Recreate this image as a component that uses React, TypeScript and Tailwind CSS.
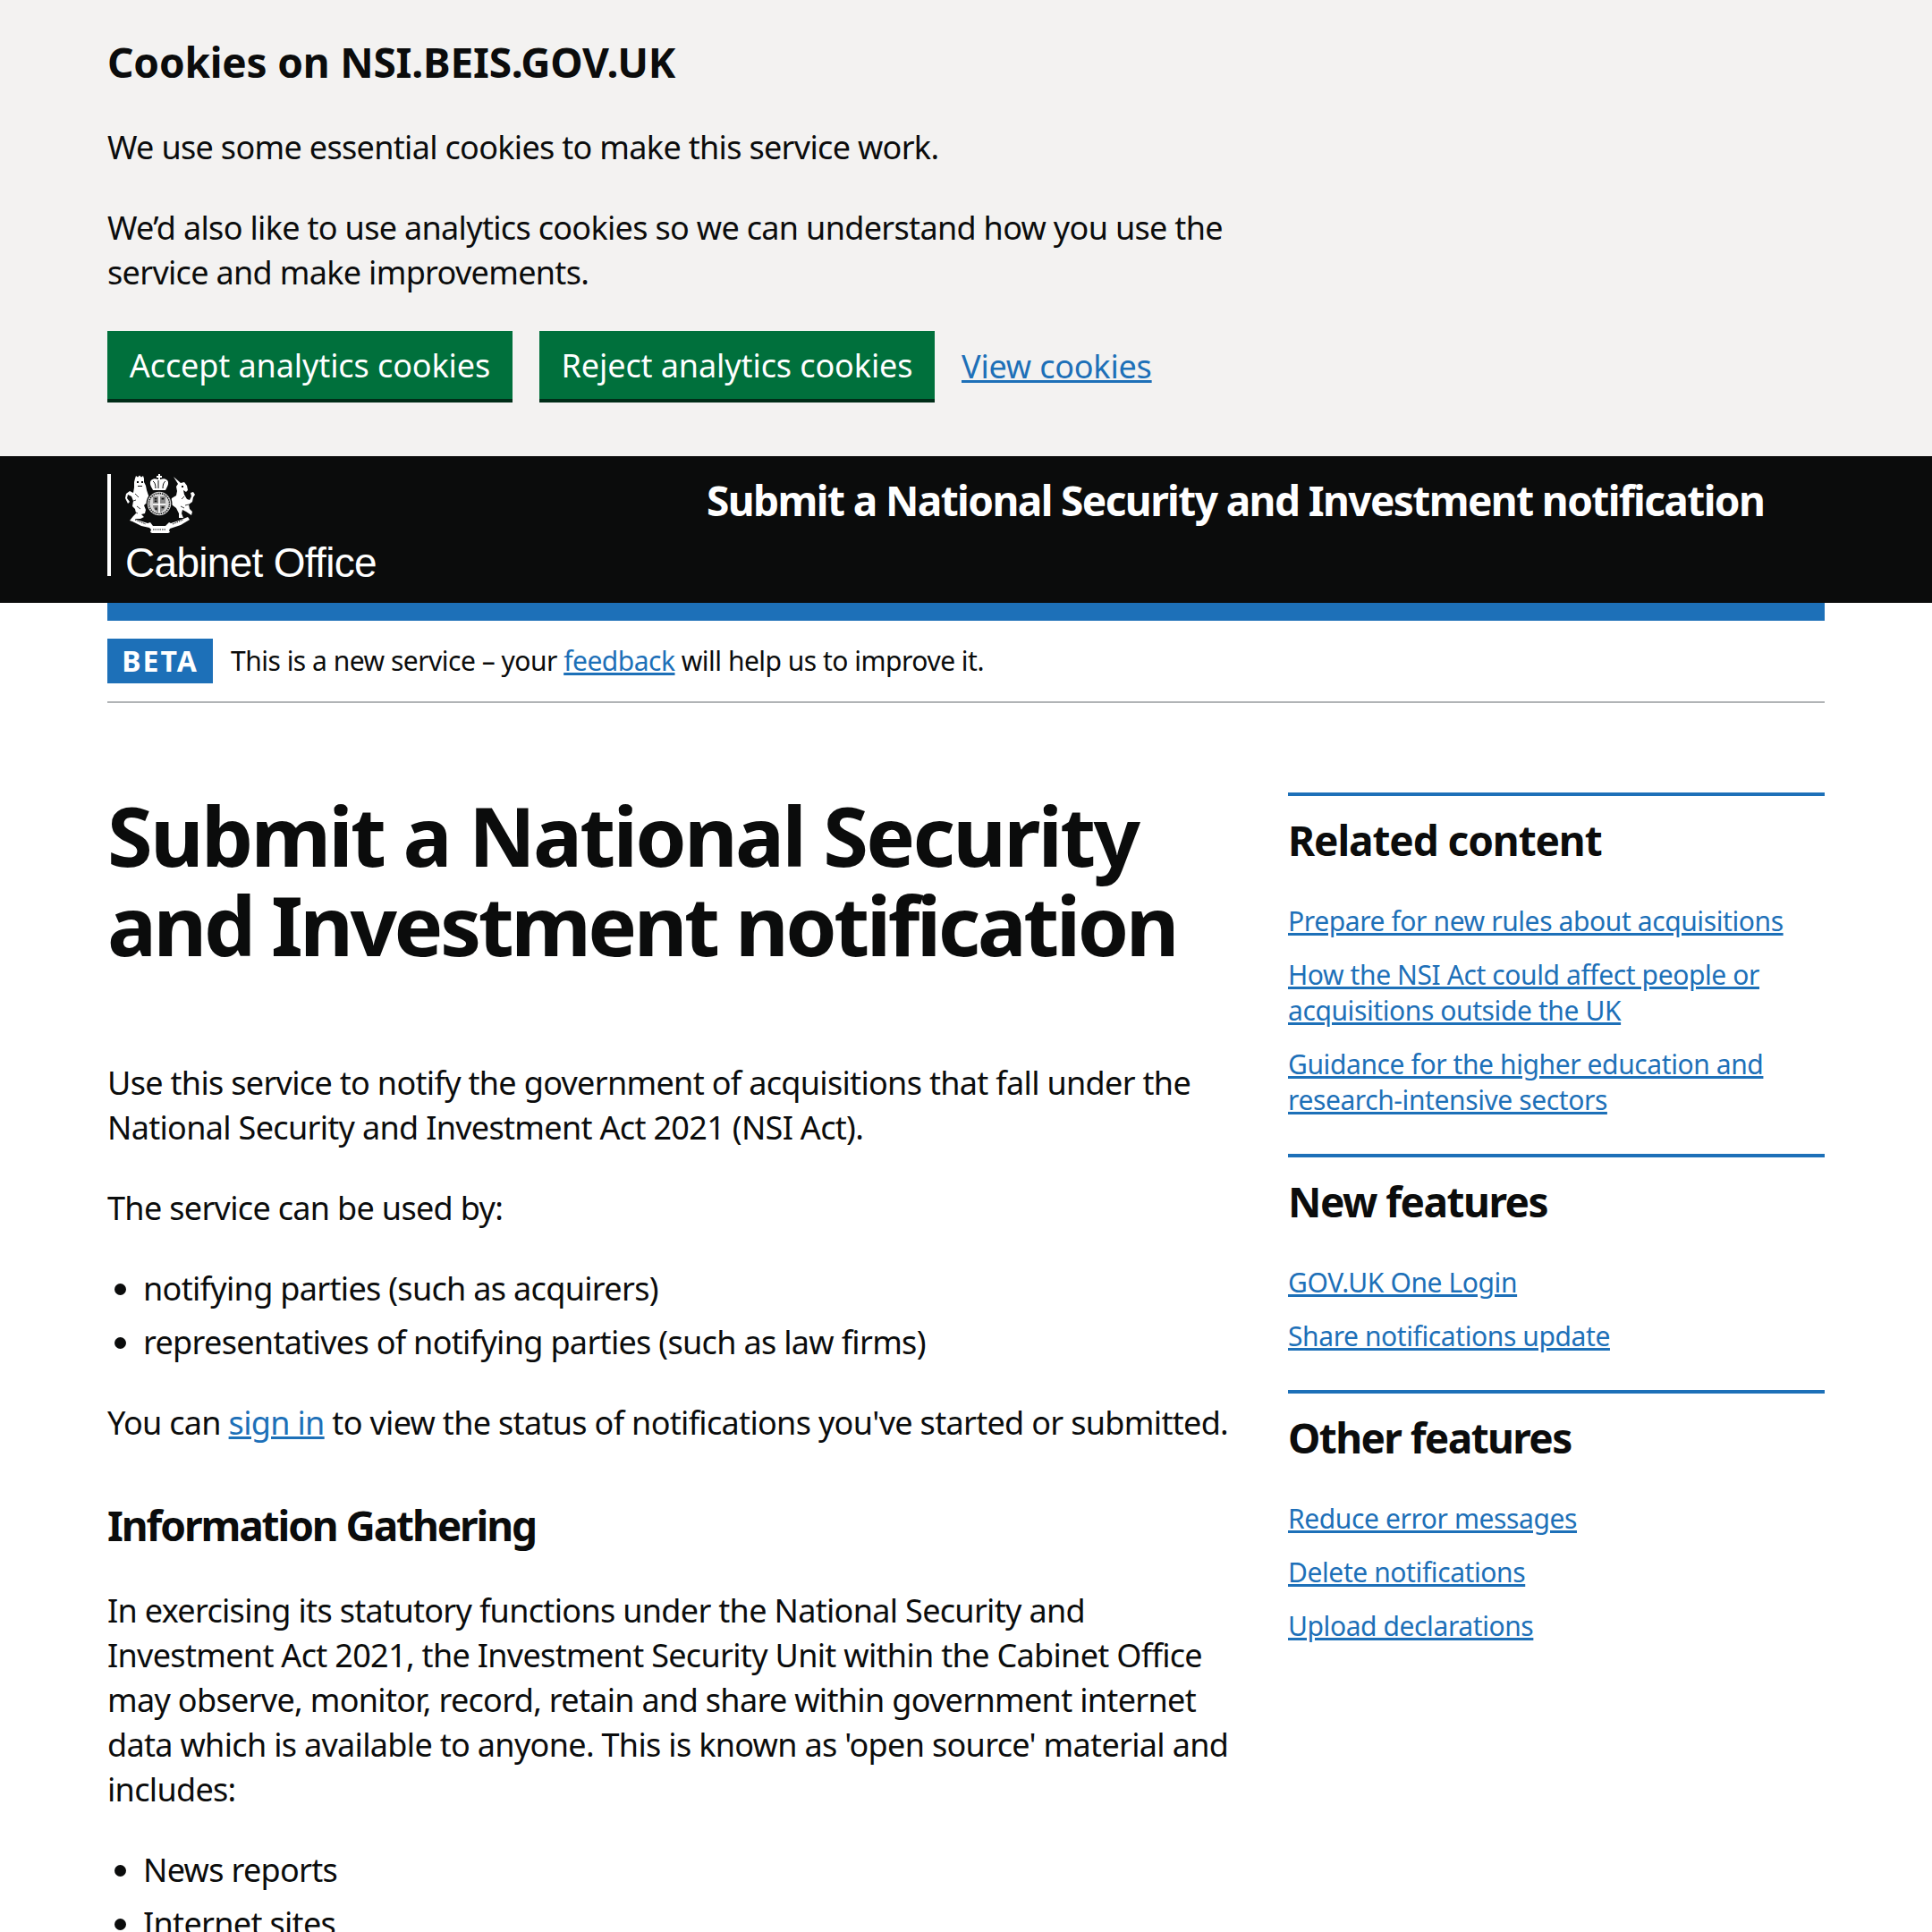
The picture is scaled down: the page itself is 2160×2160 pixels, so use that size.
import React from "react";

const Crest = () => {
  return (
    <svg viewBox="0 0 80 66" className="w-[80px] h-[66px]" fill="#fff">
      {/* lion */}
      <path d="M11 5l1-3 2 1.500 2-2 2 2 2-1.500 1 3v4l2 4 1 5 2 6 2 6-1 4-4-1-2 2 2 5-1 4-4 1 3 3-4 2h-5l-4 3-3-1 4-5 3-3-1-5-3-3 1-6-2-5-4-2-1 4 3 4-2 2-3-6 1-5 4-3 4 2 1-6V9z" />
      <path d="M13 8h2v2h-2zM18 8h2v2h-2zM14 13h5v1h-5z" fill="#0b0c0c" />
      <path d="M11 22l4 4M13 36l4 3M10 42l4 2M9 30l3-1" stroke="#0b0c0c" strokeWidth="0.8" fill="none" />
      {/* unicorn */}
      <path d="M54 3l8 7 4-1 3 4 1 5-2 2-3-2 1 5 3 5 3 1 2-4-1-4 3-1 2 3-2 3-1 5-4 3 1 5 3 3-1 4-3-2-3-2-4-2-1 4 2 5h-5v-5l-3-6-4-3-3-3 2-5 5-3 1-5-1-5 2-3z" />
      <path d="M63 13h2v2h-2z" fill="#0b0c0c" />
      <path d="M66 25l-3 3M62 36l4 2M71 34l-4 1" stroke="#0b0c0c" strokeWidth="0.8" fill="none" />
      {/* crown */}
      <path d="M37 0h2v2h2v2h-2v2c3-1 6-1 8 1 2 2 1 6-1 9l-1 2H31l-1-2c-2-3-3-7-1-9 2-2 5-2 8-1V4h-2V2h2z" />
      <path d="M31 8c2 1 3 4 3 8M37 7v9M45 8c-2 1-3 4-3 8" stroke="#0b0c0c" strokeWidth="1" fill="none" />
      {/* shield and garter */}
      <g transform="translate(4.560 3.960) scale(0.88)">
        <circle cx="38" cy="33" r="16.500" fill="#0b0c0c" />
        <circle cx="38" cy="33" r="15" fill="#d8d8d8" />
        <circle cx="38" cy="33" r="13" fill="none" stroke="#0b0c0c" strokeWidth="1.6" strokeDasharray="1.6 1.2" />
        <path d="M30 24h16v11c0 5-4 8-8 10-4-2-8-5-8-10z" fill="#8a8a8a" />
        <path d="M37 24h2v21h-2zM30 33h16v2H30z" fill="#fff" />
        <path d="M32 26h3v2h-3zM41 26h3v2h-3zM32 29h3v2h-3zM41 37h3v2h-3zM33 38h2v3h-2z" fill="#0b0c0c" />
      </g>
      {/* motto */}
      <path d="M7 49l9 3 9 3 3-1 3 4h14l4-4 2 1 9-3 10-4 2 3-10 6-9 3-3 1-1 2 1 2-2 1H30l-2-1 1-3-2-2-9-2-10-5z" />
      <path d="M11 51l12 5M53 56l12-5M31 62h14" stroke="#0b0c0c" strokeWidth="1" strokeDasharray="1.500 1" fill="none" />
    </svg>
  );
};

const SideSection = ({ title, links, titleClass }: { title: string; links: string[]; titleClass: string }) => {
  return (
    <section className="border-t-4 border-[#1d70b8] pt-[20px] pb-[20px]">
      <h2 className={titleClass}>{title}</h2>
      <ul>
        {links.map((link) => (
          <li key={link} className="mb-[20px] text-[30px] leading-[40px] tracking-[-0.4px]">
            <a href="#" className="text-[#1d70b8] underline">
              {link}
            </a>
          </li>
        ))}
      </ul>
    </section>
  );
};

const App = () => {
  return (
    <div className="h-[2160px] overflow-hidden bg-white text-[#0b0c0c] text-[36px] leading-[50px] tracking-[-0.68px] font-['Noto_Sans',sans-serif]">
      <div className="bg-[#f3f2f1] h-[510px] px-[120px] pt-[40px]">
        <div className="w-[1262px]">
          <h2 className="text-[46px] leading-[60px] font-bold -mt-[1px] mb-[41px] tracking-[-0.2px]">Cookies on NSI.BEIS.GOV.UK</h2>
          <p className="mb-[40px]">We use some essential cookies to make this service work.</p>
          <p className="mb-[40px]">We’d also like to use analytics cookies so we can understand how you use the service and make improvements.</p>
          <div className="flex items-center">
            <button className="h-[80px] w-[453px] pt-[2px] bg-[#00703c] text-white border-b-4 border-[#002d18] tracking-[-0.1px]">Accept analytics cookies</button>
            <button className="h-[80px] w-[442px] pt-[2px] ml-[30px] bg-[#00703c] text-white border-b-4 border-[#002d18] tracking-[-0.1px]">Reject analytics cookies</button>
            <a href="#" className="ml-[30px] text-[#1d70b8] underline tracking-[-0.2px]">View cookies</a>
          </div>
        </div>
      </div>

      <header className="bg-[#0b0c0c] h-[164px] px-[120px] pt-[20px] flex">
        <div className="w-[670px] h-[114px] border-l-4 border-white pl-[16px]">
          <Crest />
          <div className="text-[46px] leading-[50px] tracking-[-0.7px] text-white font-['Liberation_Sans',sans-serif] mt-[8px]">Cabinet Office</div>
        </div>
        <div className="text-[46px] leading-[60px] font-bold text-white whitespace-nowrap tracking-[-1.6px] -mt-[1px]">Submit a National Security and Investment notification</div>
      </header>

      <div className="px-[120px]">
        <div className="h-[20px] bg-[#1d70b8]" />
        <div className="flex items-center h-[92px] border-b-2 border-[#b1b4b6] pt-[20px] pb-[20px]">
          <strong className="bg-[#1d70b8] text-white text-[32px] leading-[50px] tracking-[2px] font-bold w-[118px] text-center">BETA</strong>
          <span className="ml-[20px] text-[30px] leading-[40px] tracking-[-0.5px]">
            This is a new service – your <a href="#" className="text-[#1d70b8] underline">feedback</a> will help us to improve it.
          </span>
        </div>

        <main className="flex pt-[100px]">
          <div className="w-[1262px]">
            <h1 className="text-[92px] leading-[100px] font-bold -mt-[2px] mb-[102px]">
              <span className="block tracking-[-2.75px]">Submit a National Security</span>
              <span className="block tracking-[-3.5px]">and Investment notification</span>
            </h1>
            <p className="mb-[40px]">Use this service to notify the government of acquisitions that fall under the National Security and Investment Act 2021 (NSI Act).</p>
            <p className="mb-[40px]">The service can be used by:</p>
            <ul className="list-disc pl-[40px] mb-[40px]">
              <li className="mb-[10px]">notifying parties (such as acquirers)</li>
              <li>representatives of notifying parties (such as law firms)</li>
            </ul>
            <p className="mb-[60px]">
              You can <a href="#" className="text-[#1d70b8] underline">sign in</a> to view the status of notifications you've started or submitted.
            </p>
            <h2 className="text-[46px] leading-[60px] font-bold -mt-[1px] mb-[41px] tracking-[-2.1px]">Information Gathering</h2>
            <p className="mb-[40px]">In exercising its statutory functions under the National Security and Investment Act 2021, the Investment Security Unit within the Cabinet Office may observe, monitor, record, retain and share within government internet data which is available to anyone. This is known as 'open source' material and includes:</p>
            <ul className="list-disc pl-[40px]">
              <li className="mb-[10px]">News reports</li>
              <li>Internet sites</li>
            </ul>
          </div>
          <aside className="w-[600px] ml-auto">
            <SideSection
              title="Related content"
              titleClass="text-[46px] leading-[60px] font-bold -mt-[1px] mb-[41px] tracking-[-1.1px]"
              links={[
                "Prepare for new rules about acquisitions",
                "How the NSI Act could affect people or acquisitions outside the UK",
                "Guidance for the higher education and research-intensive sectors",
              ]}
            />
            <SideSection
              title="New features"
              titleClass="text-[46px] leading-[60px] font-bold -mt-[1px] mb-[41px] tracking-[-1.5px]"
              links={["GOV.UK One Login", "Share notifications update"]}
            />
            <SideSection
              title="Other features"
              titleClass="text-[46px] leading-[60px] font-bold -mt-[1px] mb-[41px] tracking-[-1.6px]"
              links={["Reduce error messages", "Delete notifications", "Upload declarations"]}
            />
          </aside>
        </main>
      </div>
    </div>
  );
};

export default App;
